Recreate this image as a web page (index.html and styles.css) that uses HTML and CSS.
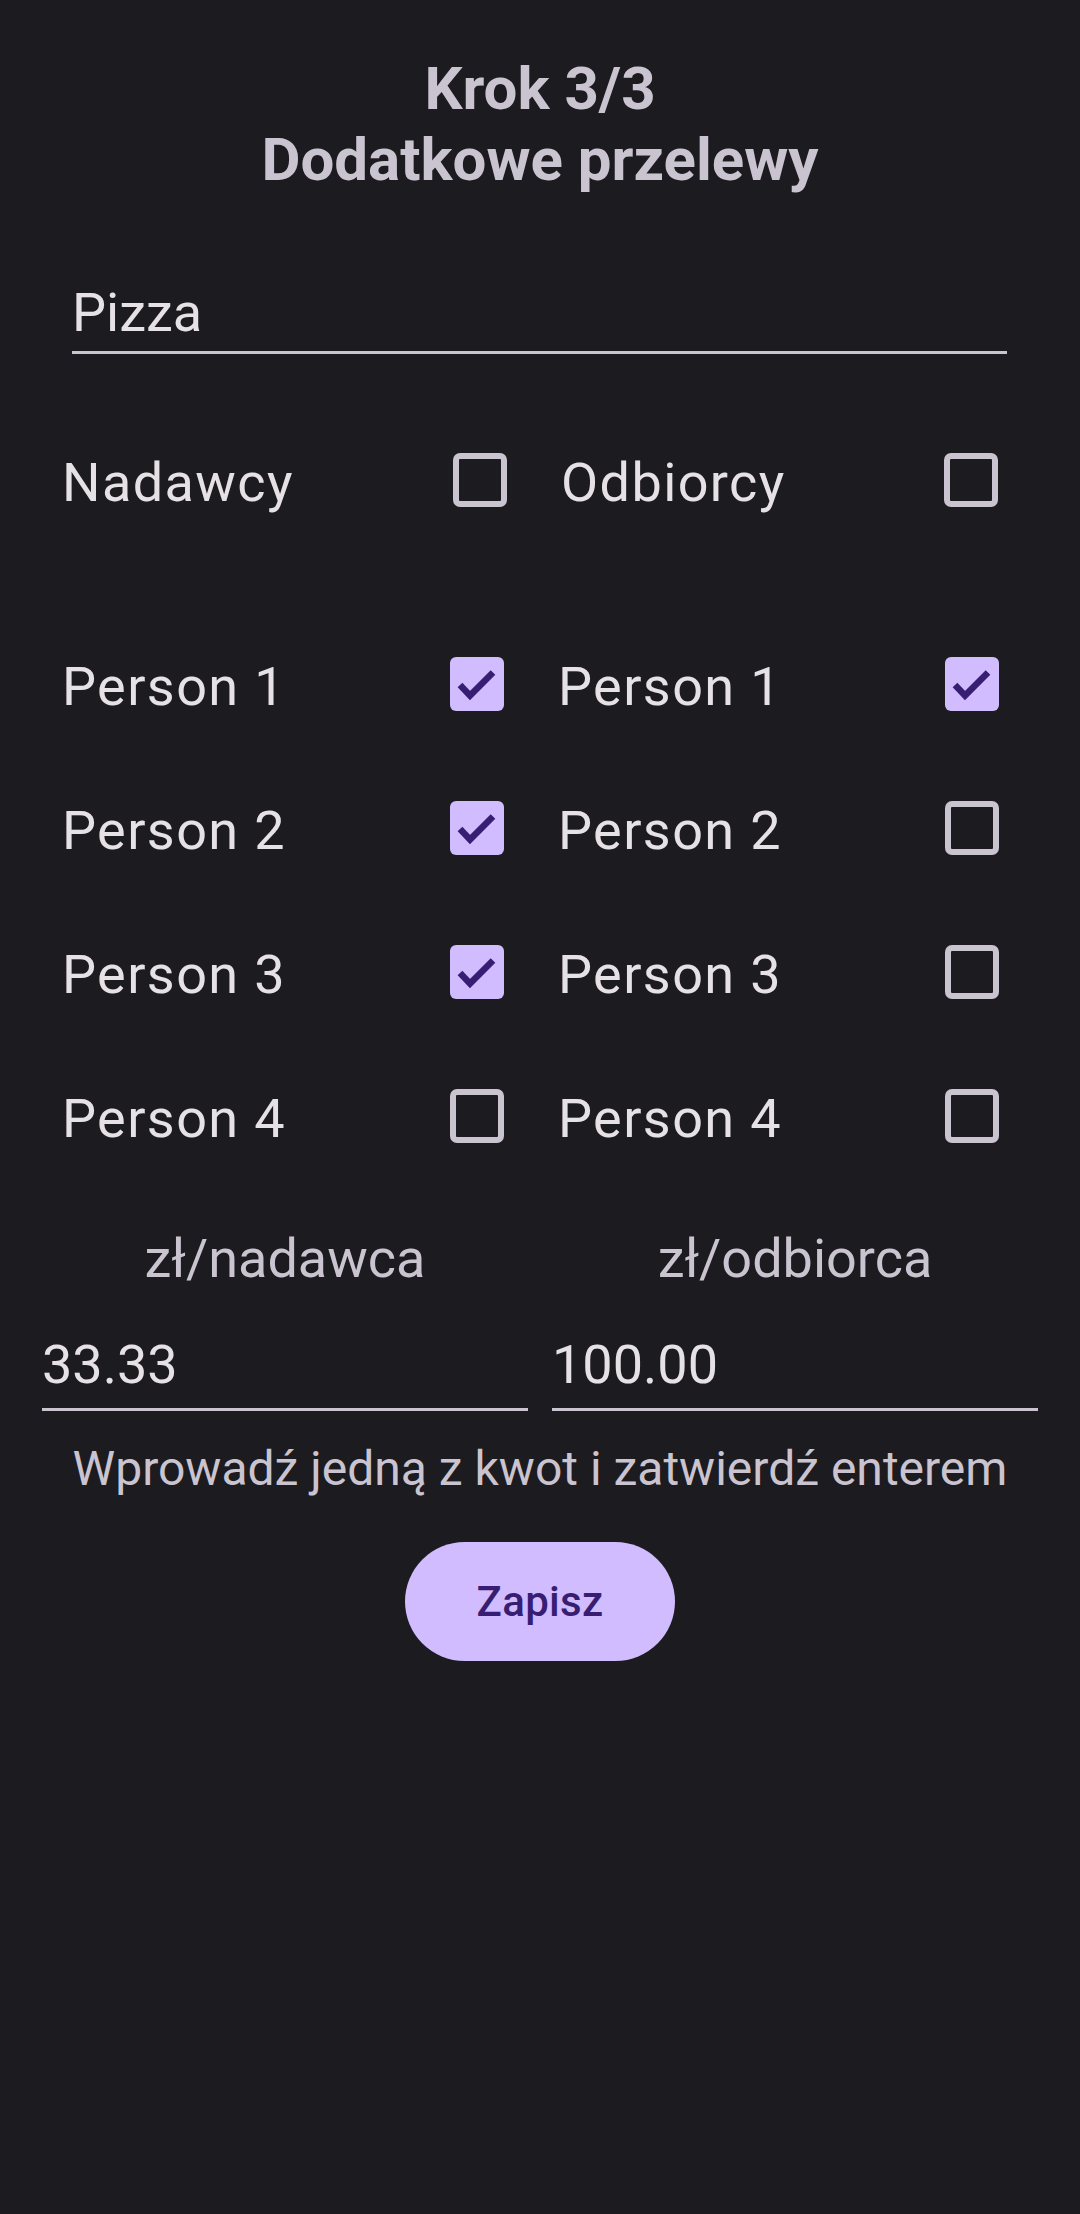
FILE: index.html
```html
<!DOCTYPE html>
<html lang="pl">
<head>
<meta charset="utf-8">
<title>Krok 3/3</title>
<link rel="stylesheet" href="styles.css">
</head>
<body>
<main class="screen">
  <h1 class="title">Krok 3/3<br>Dodatkowe przelewy</h1>

  <div class="name-field">Pizza</div>

  <div class="header-row">
    <div class="cell">
      <span class="label label-header">Nadawcy</span>
      <svg class="cb" viewBox="0 0 54 54"><rect class="cb-off" x="3" y="3" width="48" height="48" rx="4"/></svg>
    </div>
    <div class="cell cell-right">
      <span class="label label-header">Odbiorcy</span>
      <svg class="cb" viewBox="0 0 54 54"><rect class="cb-off" x="3" y="3" width="48" height="48" rx="4"/></svg>
    </div>
  </div>

  <div class="people">
    <div class="col">
      <div class="cell"><span class="label">Person 1</span><svg class="cb" viewBox="0 0 54 54"><rect class="cb-on" x="0" y="0" width="54" height="54" rx="6"/><polyline class="tick" points="10,28 20,38.5 43,15.5"/></svg></div>
      <div class="cell"><span class="label">Person 2</span><svg class="cb" viewBox="0 0 54 54"><rect class="cb-on" x="0" y="0" width="54" height="54" rx="6"/><polyline class="tick" points="10,28 20,38.5 43,15.5"/></svg></div>
      <div class="cell"><span class="label">Person 3</span><svg class="cb" viewBox="0 0 54 54"><rect class="cb-on" x="0" y="0" width="54" height="54" rx="6"/><polyline class="tick" points="10,28 20,38.5 43,15.5"/></svg></div>
      <div class="cell"><span class="label">Person 4</span><svg class="cb" viewBox="0 0 54 54"><rect class="cb-off" x="3" y="3" width="48" height="48" rx="4"/></svg></div>
    </div>
    <div class="col">
      <div class="cell"><span class="label">Person 1</span><svg class="cb" viewBox="0 0 54 54"><rect class="cb-on" x="0" y="0" width="54" height="54" rx="6"/><polyline class="tick" points="10,28 20,38.5 43,15.5"/></svg></div>
      <div class="cell"><span class="label">Person 2</span><svg class="cb" viewBox="0 0 54 54"><rect class="cb-off" x="3" y="3" width="48" height="48" rx="4"/></svg></div>
      <div class="cell"><span class="label">Person 3</span><svg class="cb" viewBox="0 0 54 54"><rect class="cb-off" x="3" y="3" width="48" height="48" rx="4"/></svg></div>
      <div class="cell"><span class="label">Person 4</span><svg class="cb" viewBox="0 0 54 54"><rect class="cb-off" x="3" y="3" width="48" height="48" rx="4"/></svg></div>
    </div>
  </div>

  <div class="amounts">
    <div class="amount">
      <div class="amount-label">zł/nadawca</div>
      <div class="amount-field">33.33</div>
    </div>
    <div class="amount">
      <div class="amount-label">zł/odbiorca</div>
      <div class="amount-field">100.00</div>
    </div>
  </div>

  <p class="hint">Wprowadź jedną z kwot i zatwierdź enterem</p>

  <div class="actions">
    <button class="save">Zapisz</button>
  </div>
</main>
</body>
</html>
```

FILE: styles.css
```css
* { box-sizing: border-box; }

html, body {
  margin: 0;
  padding: 0;
  background: #1c1b1f;
}

body {
  width: 1080px;
  min-height: 2214px;
  font-family: Roboto, "Noto Sans", "Liberation Sans", sans-serif;
  color: #e6e1e5;
}

.screen {
  display: flex;
  flex-direction: column;
  padding-top: 53px;
}

.title {
  margin: 0;
  text-align: center;
  font-size: 60px;
  line-height: 71px;
  font-weight: 700;
  color: #cac4d0;
}

.name-field {
  margin: 86px 73px 0 72px;
  font-size: 54px;
  line-height: 63px;
  padding-bottom: 7px;
  border-bottom: 3px solid #cac4d0;
  color: #e6e1e5;
}

.header-row {
  margin-top: 54px;
  display: grid;
  grid-template-columns: 445px 437px;
  column-gap: 54px;
  padding-left: 62px;
}

.people {
  margin-top: 60px;
  display: grid;
  grid-template-columns: 442px 441px;
  column-gap: 54px;
  padding-left: 62px;
}

.col {
  display: flex;
  flex-direction: column;
}

.cell {
  height: 144px;
  display: flex;
  align-items: center;
  justify-content: space-between;
}

.label {
  font-size: 54px;
  line-height: 63px;
  padding-top: 4px;
  color: #e6e1e5;
  letter-spacing: 1.4px;
}

.cb {
  width: 54px;
  height: 54px;
  flex: none;
  display: block;
}

.cb-off {
  fill: none;
  stroke: #cac4d0;
  stroke-width: 6;
}

.cb-on {
  fill: #d0bcff;
}

.tick {
  fill: none;
  stroke: #381e72;
  stroke-width: 6.5;
  stroke-linecap: butt;
  stroke-linejoin: miter;
}

.amounts {
  margin-top: 39px;
  display: grid;
  grid-template-columns: 1fr 1fr;
  column-gap: 24px;
  padding: 0 42px;
}

.amount {
  display: flex;
  flex-direction: column;
}

.amount-label {
  text-align: center;
  font-size: 54px;
  line-height: 63px;
  color: #cac4d0;
}

.amount-field {
  margin-top: 43px;
  font-size: 54px;
  line-height: 63px;
  padding-bottom: 12px;
  border-bottom: 3px solid #cac4d0;
  color: #e6e1e5;
}

.hint {
  margin: 30px 0 0;
  text-align: center;
  font-size: 48px;
  line-height: 56px;
  color: #cac4d0;
}

.actions {
  margin-top: 45px;
  display: flex;
  justify-content: center;
}

.save {
  height: 119px;
  padding: 0 72px;
  border: none;
  border-radius: 60px;
  background: #d0bcff;
  color: #381e72;
  font-family: Roboto, "Noto Sans", "Liberation Sans", sans-serif;
  font-size: 42px;
  font-weight: 500;
  letter-spacing: 0.3px;
}
```
